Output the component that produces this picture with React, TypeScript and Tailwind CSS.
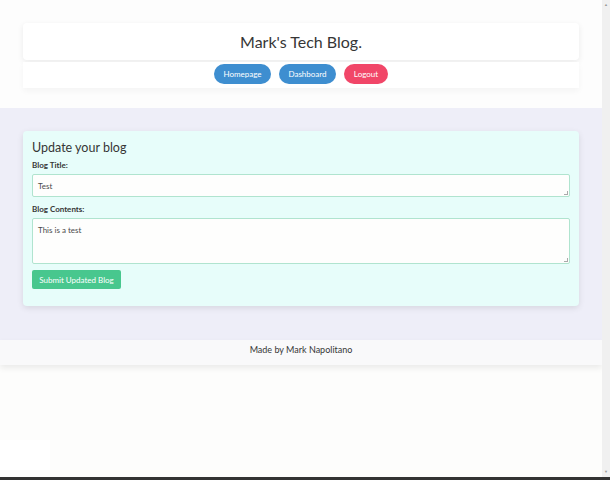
import React from "react";

export default function App() {
  const font = { fontFamily: 'Lato, "Open Sans", sans-serif' };
  return (
    <div className="w-[610px] h-[480px] flex flex-col overflow-hidden bg-[#fdfdfc]" style={font}>
      <div className="flex flex-1 min-h-0">
        <div className="flex-1 flex flex-col">
          <header className="h-[108px] bg-[#fdfdfd] px-[23px] pt-[23px]">
            <div className="h-[37px] bg-white rounded-[4px] shadow-[0_2px_6px_rgba(0,0,0,0.08)] flex items-center justify-center">
              <h1 className="text-[16px] text-[#363636] leading-none">Mark's Tech Blog.</h1>
            </div>
            <nav className="mt-[2px] bg-white shadow-[0_3px_6px_rgba(0,0,0,0.04)] flex justify-center gap-[8px] pt-[2px] pb-[4px]">
              <button className="h-[20px] w-[57px] rounded-full bg-[#3e8ed0] text-white text-[8px] flex items-center justify-center">Homepage</button>
              <button className="h-[20px] w-[57px] rounded-full bg-[#3e8ed0] text-white text-[8px] flex items-center justify-center">Dashboard</button>
              <button className="h-[20px] w-[44px] rounded-full bg-[#f14668] text-white text-[8px] flex items-center justify-center">Logout</button>
            </nav>
          </header>
          <main className="bg-[#eeeef8] px-[23px] pt-[23px] pb-[34px]">
            <div className="bg-[#e7fdfa] rounded-[4px] shadow-[0_2px_6px_rgba(0,0,0,0.1)] px-[9px] pt-[9px] pb-[17px]">
              <h2 className="text-[12.5px] text-[#363636] leading-[16px]">Update your blog</h2>
              <label className="block text-[8px] font-bold text-[#363636] mt-[2px] leading-[14px]">Blog Title:</label>
              <div className="mt-[2px] h-[23px] bg-[#fefefd] border-[1.5px] border-[#b0e4cf] rounded-[2px] flex items-center px-[5px] text-[8px] text-[#4a4a4a] relative">
                Test
                <span className="absolute right-[1px] bottom-[1px] w-[4px] h-[4px] border-r border-b border-[#aaa]" />
              </div>
              <label className="block text-[8px] font-bold text-[#363636] mt-[5px] leading-[14px]">Blog Contents:</label>
              <div className="mt-[2px] h-[46px] bg-[#fefefd] border-[1.5px] border-[#b0e4cf] rounded-[2px] px-[5px] pt-[5px] text-[8px] text-[#4a4a4a] relative leading-[12px]">
                This is a test
                <span className="absolute right-[1px] bottom-[1px] w-[4px] h-[4px] border-r border-b border-[#aaa]" />
              </div>
              <button className="mt-[6px] h-[19px] w-[89px] rounded-[2px] bg-[#48c78e] text-white text-[8px] flex items-center justify-center">Submit Updated Blog</button>
            </div>
          </main>
          <footer className="h-[25px] bg-[#f9f9fa] shadow-[0_3px_6px_rgba(0,0,0,0.08)] flex items-start justify-center pt-[3px]">
            <span className="text-[9px] text-[#363636]">Made by Mark Napolitano</span>
          </footer>
          <div className="flex-1 flex items-end">
            <div className="w-[50px] h-[37px] bg-white" />
          </div>
        </div>
        <div className="w-[8px] bg-[#f0f0f0] flex flex-col justify-between items-center py-[3px]">
          <span className="text-[4px] text-[#999] leading-none">▲</span>
          <span className="text-[4px] text-[#999] leading-none">▼</span>
        </div>
      </div>
      <div className="h-[3px] bg-[#333]" />
    </div>
  );
}
